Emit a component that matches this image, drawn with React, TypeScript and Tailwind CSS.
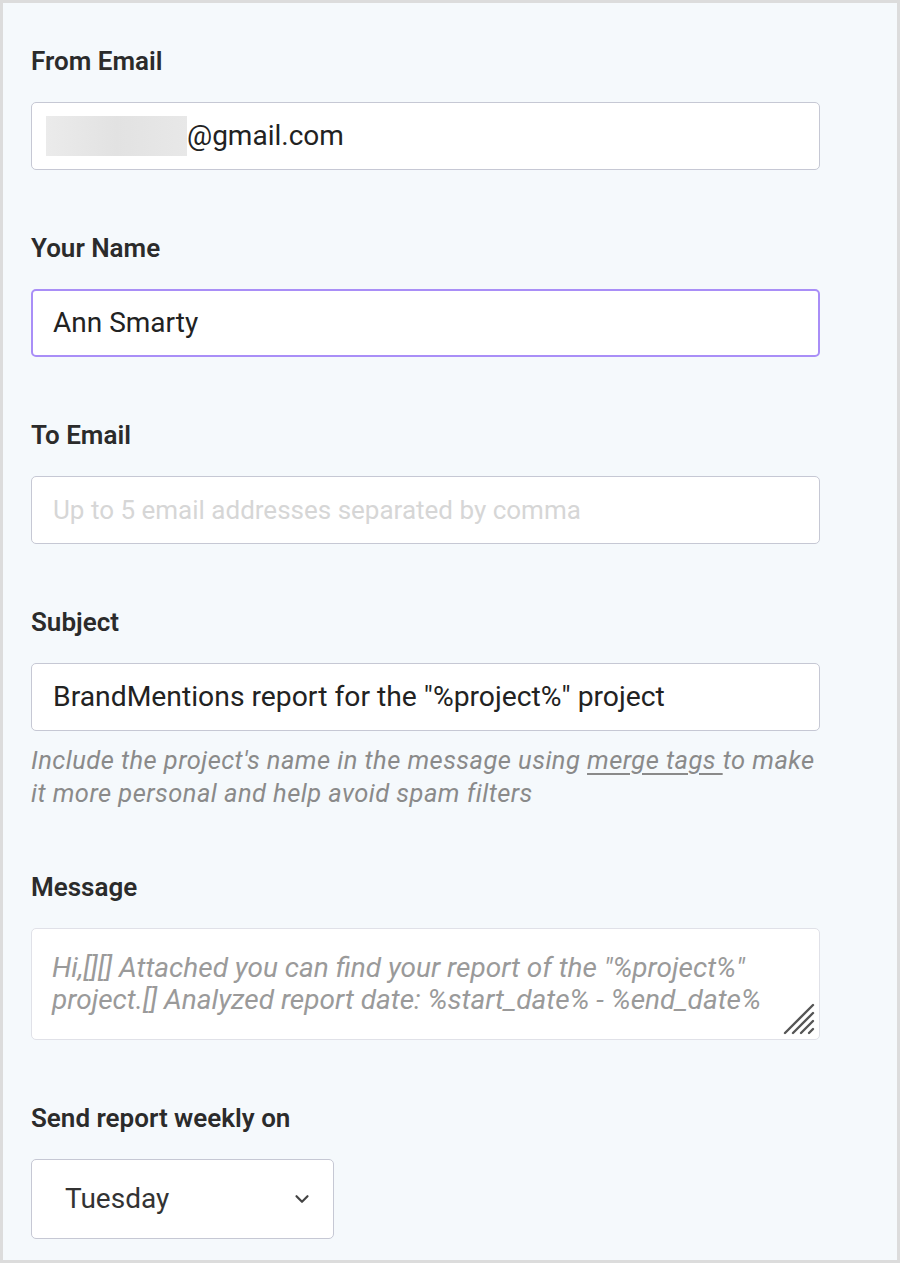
import { ChevronDown } from "lucide-react";

const font = { fontFamily: "Roboto, 'Liberation Sans', sans-serif" };

function Label({ children, className = "" }: { children: React.ReactNode; className?: string }) {
	return <div className={`h-[26px] text-[26px] leading-[26px] font-semibold text-[#2b2b2b] mb-[28px] ${className}`}>{children}</div>;
}

function ResizeGrip() {
	return (
		<svg className="absolute right-[2px] bottom-[2px]" width="36" height="36" viewBox="0 0 36 36">
			<g stroke="#555" strokeWidth="2.4" strokeLinecap="round">
				<line x1="4" y1="32" x2="32" y2="4" />
				<line x1="12" y1="32" x2="32" y2="12" />
				<line x1="20" y1="32" x2="32" y2="20" />
				<line x1="28" y1="32" x2="32" y2="28" />
			</g>
		</svg>
	);
}

export default function App() {
	return (
		<div style={font} className="w-[900px] h-[1263px] border-[3px] border-[#dcdcdc] bg-[#f5f9fc] pl-[28px] pt-[45px]">
			<div className="w-[789px]">
				<Label>From Email</Label>
				<div className="h-[68px] rounded-[5px] border border-[#c6c8d4] bg-white flex items-center pl-[14px] text-[28px] text-[#222]">
					<div className="w-[141px] h-[40px] bg-gradient-to-r from-[#ebebeb] via-[#e2e2e2] to-[#e8e8e8]" />
					<span>@gmail.com</span>
				</div>

				<Label className="mt-[65px]">Your Name</Label>
				<div className="h-[68px] rounded-[5px] border-2 border-[#a98ef7] bg-white flex items-center pl-[20px] text-[28px] text-[#222]">
					Ann Smarty
				</div>

				<Label className="mt-[65px]">To Email</Label>
				<div className="h-[68px] rounded-[5px] border border-[#c6c8d4] bg-white flex items-center pl-[21px] text-[26px] text-[#d6d6d6]">
					Up to 5 email addresses separated by comma
				</div>

				<Label className="mt-[65px]">Subject</Label>
				<div className="h-[68px] rounded-[5px] border border-[#c6c8d4] bg-white flex items-center pl-[21px] text-[28.3px] text-[#222]">
					BrandMentions report for the "%project%" project
				</div>
				<p className="mt-[13px] text-[25.5px] leading-[33px] italic text-[#8a8a8a] tracking-[0.45px]">
					Include the project's name in the message using <span className="underline underline-offset-[4px]">merge tags </span>to make it more personal and help avoid spam filters
				</p>

				<Label className="mt-[64px]">Message</Label>
				<div className="relative h-[112px] rounded-[5px] border border-[#e0e1e8] bg-white pl-[20px] pt-[23px] text-[28px] leading-[32px] italic text-[#9a9a9a]">
					<div>Hi,[][] Attached you can find your report of the "%project%"</div>
					<div>project.[] Analyzed report date: %start_date% - %end_date%</div>
					<ResizeGrip />
				</div>

				<Label className="mt-[65px]">Send report weekly on</Label>
				<div className="w-[303px] h-[80px] rounded-[5px] border border-[#c6c8d4] bg-white flex items-center justify-between pl-[33px] pr-[20px] text-[28px] text-[#333]">
					<span>Tuesday</span>
					<ChevronDown size={22} strokeWidth={2.4} color="#444" />
				</div>
			</div>
		</div>
	);
}
